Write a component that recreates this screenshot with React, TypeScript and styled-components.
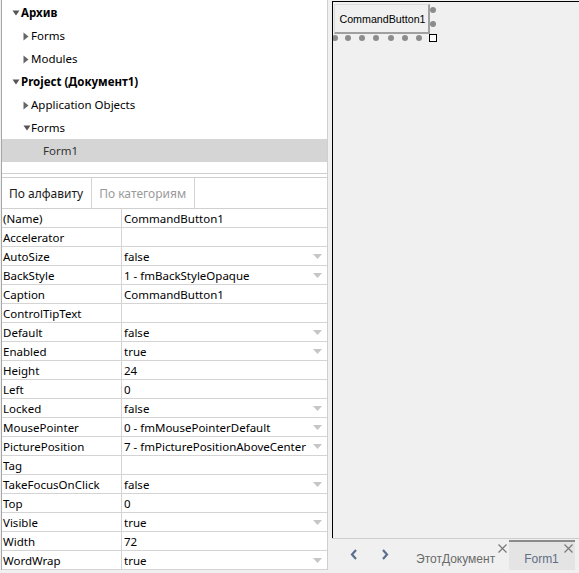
import React from "react";
import styled, { createGlobalStyle } from "styled-components";

const GlobalStyle = createGlobalStyle`
  html, body {
    margin: 0;
    padding: 0;
    background: #f0f0f0;
    overflow: hidden;
  }
  * {
    box-sizing: border-box;
  }
`;

type TreeNode = { label: string; level: number; toggle?: "open" | "closed"; bold?: boolean; selected?: boolean };

const tree: TreeNode[] = [
  { label: "Архив", level: 0, toggle: "open", bold: true },
  { label: "Forms", level: 1, toggle: "closed" },
  { label: "Modules", level: 1, toggle: "closed" },
  { label: "Project (Документ1)", level: 0, toggle: "open", bold: true },
  { label: "Application Objects", level: 1, toggle: "closed" },
  { label: "Forms", level: 1, toggle: "open" },
  { label: "Form1", level: 2, selected: true },
];

type Prop = { name: string; value: string; list?: boolean };

const props: Prop[] = [
  { name: "(Name)", value: "CommandButton1" },
  { name: "Accelerator", value: "" },
  { name: "AutoSize", value: "false", list: true },
  { name: "BackStyle", value: "1 - fmBackStyleOpaque", list: true },
  { name: "Caption", value: "CommandButton1" },
  { name: "ControlTipText", value: "" },
  { name: "Default", value: "false", list: true },
  { name: "Enabled", value: "true", list: true },
  { name: "Height", value: "24" },
  { name: "Left", value: "0" },
  { name: "Locked", value: "false", list: true },
  { name: "MousePointer", value: "0 - fmMousePointerDefault", list: true },
  { name: "PicturePosition", value: "7 - fmPicturePositionAboveCenter", list: true },
  { name: "Tag", value: "" },
  { name: "TakeFocusOnClick", value: "false", list: true },
  { name: "Top", value: "0" },
  { name: "Visible", value: "true", list: true },
  { name: "Width", value: "72" },
  { name: "WordWrap", value: "true", list: true },
];

// grip handles around the selected control (relative to canvas)
const dots = [
  { x: 100, y: 8 },
  { x: 100, y: 22 },
  { x: 2, y: 36 },
  { x: 15, y: 36 },
  { x: 29, y: 36 },
  { x: 43, y: 36 },
  { x: 58, y: 36 },
  { x: 72, y: 36 },
  { x: 86, y: 36 },
];

function Toggle({ open }: { open: boolean }) {
  return open ? (
    <svg width="8" height="6" viewBox="0 0 8 6">
      <path d="M0.5 0.5 L7.5 0.5 L4 5.5 Z" fill="#555" />
    </svg>
  ) : (
    <svg width="6" height="9" viewBox="0 0 6 9">
      <path d="M0.5 0.5 L5.5 4.5 L0.5 8.5 Z" fill="#666" />
    </svg>
  );
}

function DropArrow() {
  return (
    <svg width="9" height="5" viewBox="0 0 9 5">
      <path d="M0 0 L9 0 L4.5 5 Z" fill="#c6c6c6" />
    </svg>
  );
}

function CloseIcon() {
  return (
    <svg width="9" height="9" viewBox="0 0 9 9">
      <path d="M0.5 0.5 L8.5 8.5 M8.5 0.5 L0.5 8.5" stroke="#7a7a7a" strokeWidth="1.2" />
    </svg>
  );
}

function Chevron({ dir }: { dir: "left" | "right" }) {
  return (
    <svg width="8" height="11" viewBox="0 0 8 11">
      <path
        d={dir === "left" ? "M6 1 L2 5.5 L6 10" : "M2 1 L6 5.5 L2 10"}
        fill="none"
        stroke="#5b6f8c"
        strokeWidth="2.2"
      />
    </svg>
  );
}

export default function App() {
  return (
    <>
      <GlobalStyle />
      <Window>
        <LeftPanel>
          <TreePane>
            {tree.map((n, i) => (
              <TreeRow key={i} $level={n.level} $selected={!!n.selected}>
                {n.toggle && (
                  <ToggleBox $level={n.level}>
                    <Toggle open={n.toggle === "open"} />
                  </ToggleBox>
                )}
                <TreeLabel $bold={!!n.bold}>{n.label}</TreeLabel>
              </TreeRow>
            ))}
          </TreePane>
          <Splitter />
          <PropsPane>
            <TabRow>
              <PropTab $active>По алфавиту</PropTab>
              <PropTab>По категориям</PropTab>
            </TabRow>
            <Grid>
              {props.map((p) => (
                <React.Fragment key={p.name}>
                  <NameCell>{p.name}</NameCell>
                  <ValueCell>
                    <span>{p.value}</span>
                    {p.list && <DropArrow />}
                  </ValueCell>
                </React.Fragment>
              ))}
            </Grid>
          </PropsPane>
        </LeftPanel>

        <RightPanel>
          <Canvas>
            <FormButton>CommandButton1</FormButton>
            {dots.map((d, i) => (
              <Grip key={i} style={{ left: d.x - 3, top: d.y - 3 }} />
            ))}
            <Handle />
          </Canvas>
          <TabBar>
            <NavButton>
              <Chevron dir="left" />
            </NavButton>
            <NavButton>
              <Chevron dir="right" />
            </NavButton>
            <DocTab $pl={16} $pr={14}>
              ЭтотДокумент
              <CloseBox>
                <CloseIcon />
              </CloseBox>
            </DocTab>
            <DocTab $active $pl={15} $pr={16}>
              Form1
              <CloseBox>
                <CloseIcon />
              </CloseBox>
            </DocTab>
          </TabBar>
        </RightPanel>
      </Window>
    </>
  );
}

const Window = styled.div`
  display: flex;
  width: 579px;
  height: 573px;
  font-family: "Noto Sans", "Open Sans", sans-serif;
  font-size: 11.5px;
  color: #000;
`;

const LeftPanel = styled.div`
  width: 327px;
  margin-left: 1px;
  align-self: flex-start;
  display: flex;
  flex-direction: column;
  background: #fff;
  border-left: 1px solid #a6a6a6;
  border-right: 1px solid #cfcfcf;
`;

const TreePane = styled.div`
  height: 174px;
  padding-top: 1px;
  border-bottom: 1px solid #cfcfcf;
`;

const TreeRow = styled.div<{ $level: number; $selected: boolean }>`
  display: flex;
  align-items: center;
  height: 23px;
  padding-left: ${(p) => (p.$level === 0 ? 9 : p.$level === 1 ? 20 : 41)}px;
  background: ${(p) => (p.$selected ? "#d5d5d5" : "transparent")};
  color: ${(p) => (p.$selected ? "#333" : "#000")};
`;

const ToggleBox = styled.span<{ $level: number }>`
  display: inline-flex;
  align-items: center;
  width: ${(p) => (p.$level === 0 ? 10 : 9)}px;
  padding-left: 1px;
  margin-top: 1px;
`;

const TreeLabel = styled.span<{ $bold: boolean }>`
  font-weight: ${(p) => (p.$bold ? 700 : 400)};
  white-space: nowrap;
`;

const Splitter = styled.div`
  height: 3px;
`;

const PropsPane = styled.div`
  border-top: 1px solid #cfcfcf;
`;

const TabRow = styled.div`
  display: flex;
  height: 31px;
  border-bottom: 1px solid #d0d0d0;
`;

const PropTab = styled.div<{ $active?: boolean }>`
  display: flex;
  align-items: center;
  padding: 1px 8px 0 7px;
  border-right: 1px solid #d4d4d4;
  font-size: 12px;
  color: ${(p) => (p.$active ? "#1a1a1a" : "#9a9a9a")};
  white-space: nowrap;
`;

const Grid = styled.div`
  display: grid;
  grid-template-columns: 120px 1fr;
  grid-auto-rows: 19px;
`;

const NameCell = styled.div`
  display: flex;
  align-items: center;
  padding: 1px 0 0 1px;
  border-right: 1px solid #d4d4d4;
  border-bottom: 1px solid #d4d4d4;
  white-space: nowrap;
  overflow: hidden;
`;

const ValueCell = styled.div`
  display: flex;
  align-items: center;
  justify-content: space-between;
  padding: 1px 5px 0 2px;
  border-bottom: 1px solid #d4d4d4;
  white-space: nowrap;
  overflow: hidden;
`;

const RightPanel = styled.div`
  flex: 1;
  display: flex;
  flex-direction: column;
  margin-left: 4px;
  min-width: 0;
`;

const Canvas = styled.div`
  position: relative;
  flex: 1;
  margin-top: 1px;
  background: #f0f0f0;
  border-top: 1px solid #000;
  border-left: 1px solid #000;
  overflow: hidden;
`;

const FormButton = styled.div`
  position: absolute;
  left: 1px;
  top: 2px;
  width: 96px;
  height: 30px;
  display: flex;
  align-items: center;
  justify-content: center;
  background: #f0f0f0;
  border-top: 1px solid #dcdcdc;
  border-left: 1px solid #dcdcdc;
  border-right: 2px solid #a0a0a0;
  border-bottom: 2px solid #a0a0a0;
  font-family: "Liberation Sans", Arial, sans-serif;
  font-size: 10.7px;
  color: #000;
  padding-left: 2px;
`;

const Grip = styled.div`
  position: absolute;
  width: 6px;
  height: 6px;
  border-radius: 50%;
  background: #8c8c8c;
`;

const Handle = styled.div`
  position: absolute;
  left: 96px;
  top: 32px;
  width: 8px;
  height: 8px;
  background: #fff;
  border: 1px solid #000;
`;

const TabBar = styled.div`
  height: 35px;
  display: flex;
  align-items: stretch;
  padding: 1px 0 3px 6px;
  border-top: 1px solid #cccccc;
  background: #f0f0f0;
`;

const NavButton = styled.div`
  width: 31px;
  display: flex;
  align-items: center;
  justify-content: center;
  padding-bottom: 2px;
`;

const DocTab = styled.div<{ $active?: boolean; $pl: number; $pr: number }>`
  position: relative;
  display: flex;
  align-items: flex-end;
  padding: 0 ${(p) => p.$pr}px 4px ${(p) => p.$pl}px;
  background: ${(p) => (p.$active ? "#e4e4e4" : "transparent")};
  border-top: 2px solid ${(p) => (p.$active ? "#8a8a8a" : "transparent")};
  font-family: "Liberation Sans", Arial, sans-serif;
  font-size: 12px;
  color: ${(p) => (p.$active ? "#5f6f85" : "#6a6a6a")};
  white-space: nowrap;
`;

const CloseBox = styled.span`
  position: absolute;
  right: 2px;
  top: 2px;
  display: flex;
`;
